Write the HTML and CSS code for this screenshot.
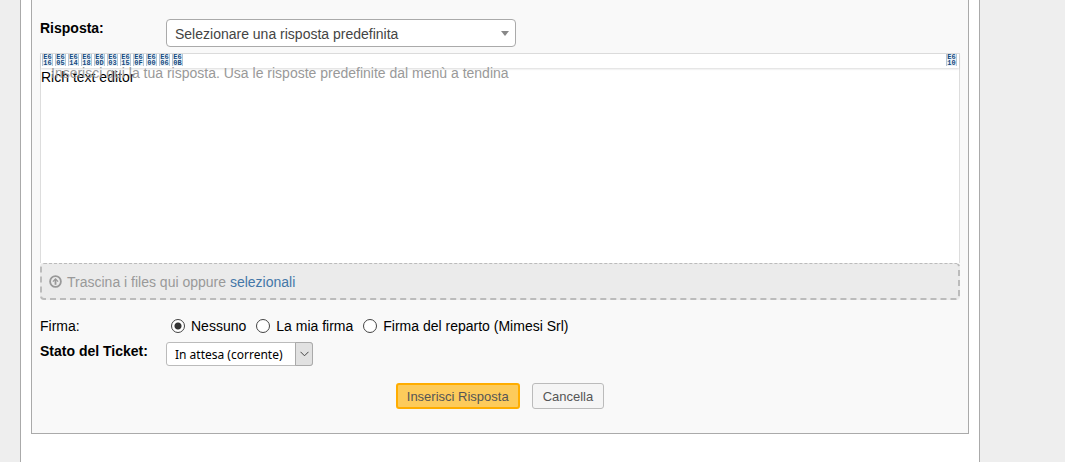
FILE: index.html
```html
<!DOCTYPE html>
<html lang="it">
<head>
    <meta charset="UTF-8">
    <meta name="viewport" content="width=device-width, initial-scale=1.0">
    <title>Ticket - Risposta</title>
    <link rel="stylesheet" href="styles.css">
</head>
<body>
    <div id="container">
        <form class="reply">
            <div class="row response-row">
                <label class="title" for="cannedResp">Risposta:</label>
                <div class="select canned">
                    <select id="cannedResp">
                        <option>Selezionare una risposta predefinita</option>
                    </select>
                    <svg class="caret" width="8" height="5" viewBox="0 0 8 5"><path d="M0 0h8L4 5z" fill="#888"/></svg>
                </div>
            </div>

            <div class="editor">
                <div class="toolbar">
                    <button type="button">E6<br>16</button>
                    <button type="button">E6<br>05</button>
                    <button type="button">E6<br>14</button>
                    <button type="button">E6<br>18</button>
                    <button type="button">E6<br>0D</button>
                    <button type="button">E6<br>03</button>
                    <button type="button">E6<br>15</button>
                    <button type="button">E6<br>0F</button>
                    <button type="button">E6<br>00</button>
                    <button type="button">E6<br>06</button>
                    <button type="button">E6<br>0B</button>
                    <button type="button" class="last">E6<br>10</button>
                </div>
                <div class="editor-body">
                    <span class="placeholder">Inserisci qui la tua risposta. Usa le risposte predefinite dal menù a tendina</span>
                    <textarea id="response" aria-label="Risposta" spellcheck="false">Rich text editor</textarea>
                </div>
            </div>

            <div class="dropzone">
                <svg width="13" height="13" viewBox="0 0 13 13" fill="none" stroke="#999"><circle cx="6.500" cy="6.500" r="5.400" stroke-width="1.800"/><path d="M6.500 9.800V4.500" stroke-width="1.800"/><path d="M3.900 6.600l2.600-2.600 2.600 2.600" stroke-width="1.300"/></svg>
                <span>Trascina i files qui oppure <a href="#">selezionali</a></span>
            </div>

            <div class="row signature-row">
                <span class="title plain">Firma:</span>
                <div class="radios">
                    <label><input type="radio" name="signature" checked>Nessuno</label>
                    <label><input type="radio" name="signature">La mia firma</label>
                    <label><input type="radio" name="signature">Firma del reparto (Mimesi Srl)</label>
                </div>
            </div>

            <div class="row">
                <label class="title" for="status">Stato del Ticket:</label>
                <div class="select status">
                    <select id="status">
                        <option>In attesa (corrente)</option>
                    </select>
                    <span class="arrow"><svg width="9" height="6" viewBox="0 0 9 6" fill="none" stroke="#444"><path d="M.5.8l4 4 4-4"/></svg></span>
                </div>
            </div>

            <div class="buttons">
                <button type="submit" class="save">Inserisci Risposta</button>
                <button type="reset">Cancella</button>
            </div>
        </form>
    </div>
</body>
</html>
```
FILE: styles.css
```css
* {
    box-sizing: border-box;
}
body {
    margin: 0;
    background: #eee;
    color: #000;
    font-family: "Liberation Sans", Arial, sans-serif;
    font-size: 14px;
    line-height: 18px;
}
#container {
    min-height: 100vh;
    margin: 0 85px 0 20px;
    padding: 0 10px;
    background: #fff;
    border: solid #aaa;
    border-width: 0 1px;
}
.reply {
    padding: 19px 8px 24px;
    background: #f9f9f9;
    border: 1px solid #aaa;
    border-top: 0;
}
.row {
    display: flex;
}
.title {
    width: 126px;
    font-weight: bold;
}
.title.plain {
    font-weight: normal;
}
.response-row {
    margin-bottom: 6px;
}
.select {
    position: relative;
}
select {
    appearance: none;
    display: block;
    width: 100%;
    height: 100%;
    margin: 0;
    padding: 2px 8px 0;
    background: #fff;
    border: 1px solid #aaa;
    border-radius: 4px;
    color: #444;
    font: inherit;
}
.canned {
    width: 350px;
    height: 28px;
}
.caret {
    position: absolute;
    right: 7px;
    top: 12px;
    pointer-events: none;
}
.status {
    width: 147px;
    height: 24px;
}
.status select {
    border-color: #bbb;
    border-radius: 3px;
    color: #000;
    font-family: "Noto Sans", sans-serif;
    font-size: 12px;
}
.arrow {
    position: absolute;
    top: 0;
    right: 0;
    bottom: 0;
    width: 18px;
    display: flex;
    align-items: center;
    justify-content: center;
    background: #e1e1e1;
    border: 1px solid #aaa;
    border-radius: 0 3px 3px 0;
    pointer-events: none;
}
.editor {
    background: #fff;
    border: 1px solid #ddd;
    border-bottom: 0;
}
.toolbar {
    display: flex;
    gap: 2px;
    height: 14px;
    padding: 0 2px 0 1px;
    box-shadow: 0 1px 2px rgba(0, 0, 0, 0.15);
}
.toolbar button {
    width: 11px;
    height: 12px;
    padding: 0;
    background: #edf2f7;
    border: solid #b4c6d6;
    border-width: 0 1px;
    color: #124a80;
    font: bold 7px/6px "Liberation Mono", monospace;
    text-align: center;
}
.toolbar .last {
    margin-left: auto;
}
.editor-body {
    position: relative;
    height: 195px;
}
.placeholder {
    position: absolute;
    left: 10px;
    top: -4px;
    color: #999;
    pointer-events: none;
}
textarea {
    display: block;
    width: 100%;
    height: 100%;
    padding: 0;
    background: transparent;
    border: 0;
    outline: 0;
    resize: none;
    color: #000;
    font: inherit;
}
.dropzone {
    display: flex;
    align-items: center;
    gap: 5px;
    height: 37px;
    padding: 1px 7px 0;
    background: #ebebeb;
    border: 2px dashed #bbb;
    border-top-width: 1px;
    border-radius: 4px;
    color: #999;
}
.dropzone a {
    color: #4477a8;
    text-decoration: none;
}
.signature-row {
    margin: 17px 0 7px;
}
.radios {
    display: flex;
    gap: 10px;
    padding-left: 5px;
}
.radios label {
    display: flex;
    align-items: center;
    gap: 6px;
}
input[type="radio"] {
    appearance: none;
    width: 14px;
    height: 14px;
    margin: 0;
    background: #fff;
    border: 1px solid #444;
    border-radius: 50%;
}
input[type="radio"]:checked {
    background: radial-gradient(#333 3px, #fff 4px);
}
.buttons {
    display: flex;
    justify-content: center;
    gap: 12px;
    margin-top: 17px;
}
.buttons button {
    height: 26px;
    padding: 0 10px;
    background: #f5f5f5;
    border: 1px solid #bbb;
    border-radius: 3px;
    color: #555;
    font: 13px "Liberation Sans", Arial, sans-serif;
    cursor: pointer;
}
.buttons .save {
    padding: 0 9px;
    background: #fdcb5b;
    border: 2px solid #ffad00;
}
```
